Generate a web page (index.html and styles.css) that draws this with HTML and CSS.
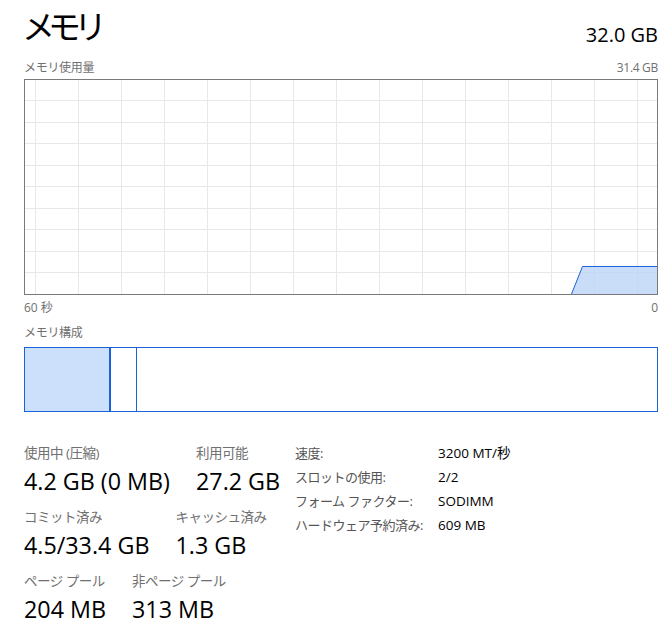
FILE: index.html
```html
<!DOCTYPE html>
<html lang="ja">
<head>
  <meta charset="UTF-8">
  <title>メモリ</title>
  <link rel="stylesheet" href="styles.css">
</head>
<body>

<div class="memory-page">
  <div class="header">
    <h1 class="title">メモリ</h1>
    <span class="total">32.0 GB</span>
  </div>

  <div class="chart-caption">
    <span>メモリ使用量</span>
    <span>31.4 GB</span>
  </div>

  <svg class="usage-chart" width="634" height="216" viewBox="0 0 634 216">
    <g stroke="#e8e8e8" stroke-width="1">
      <line x1="11.5" y1="0" x2="11.5" y2="216"/>
      <line x1="54.5" y1="0" x2="54.5" y2="216"/>
      <line x1="97.5" y1="0" x2="97.5" y2="216"/>
      <line x1="140.5" y1="0" x2="140.5" y2="216"/>
      <line x1="183.5" y1="0" x2="183.5" y2="216"/>
      <line x1="226.5" y1="0" x2="226.5" y2="216"/>
      <line x1="269.5" y1="0" x2="269.5" y2="216"/>
      <line x1="312.5" y1="0" x2="312.5" y2="216"/>
      <line x1="355.5" y1="0" x2="355.5" y2="216"/>
      <line x1="398.5" y1="0" x2="398.5" y2="216"/>
      <line x1="441.5" y1="0" x2="441.5" y2="216"/>
      <line x1="484.5" y1="0" x2="484.5" y2="216"/>
      <line x1="527.5" y1="0" x2="527.5" y2="216"/>
      <line x1="570.5" y1="0" x2="570.5" y2="216"/>
      <line x1="613.5" y1="0" x2="613.5" y2="216"/>
      <line x1="0" y1="21.5" x2="634" y2="21.5"/>
      <line x1="0" y1="43.5" x2="634" y2="43.5"/>
      <line x1="0" y1="64.5" x2="634" y2="64.5"/>
      <line x1="0" y1="86.5" x2="634" y2="86.5"/>
      <line x1="0" y1="107.5" x2="634" y2="107.5"/>
      <line x1="0" y1="129.5" x2="634" y2="129.5"/>
      <line x1="0" y1="150.5" x2="634" y2="150.5"/>
      <line x1="0" y1="172.5" x2="634" y2="172.5"/>
      <line x1="0" y1="193.5" x2="634" y2="193.5"/>
    </g>
    <polygon points="547.5,215 558.5,187.5 633,187.5 633,215" fill="#bcd5f7" fill-opacity="0.8"/>
    <polyline points="547.5,215 558.5,187.5 633,187.5" fill="none" stroke="#1a63d8" stroke-width="1"/>
    <rect x="0.5" y="0.5" width="633" height="215" fill="none" stroke="#7a7a7a" stroke-width="1"/>
  </svg>

  <div class="axis">
    <span>60 秒</span>
    <span>0</span>
  </div>

  <div class="section-label">メモリ構成</div>

  <div class="composition">
    <div class="seg seg-used"></div>
    <div class="seg seg-modified"></div>
    <div class="seg seg-rest"></div>
  </div>

  <div class="stats">
    <div class="stats-left">
      <div class="stat-row">
        <div class="stat">
          <div class="stat-label">使用中 (圧縮)</div>
          <div class="stat-value">4.2 GB (0 MB)</div>
        </div>
        <div class="stat">
          <div class="stat-label">利用可能</div>
          <div class="stat-value">27.2 GB</div>
        </div>
      </div>
      <div class="stat-row">
        <div class="stat">
          <div class="stat-label">コミット済み</div>
          <div class="stat-value">4.5/33.4 GB</div>
        </div>
        <div class="stat">
          <div class="stat-label">キャッシュ済み</div>
          <div class="stat-value">1.3 GB</div>
        </div>
      </div>
      <div class="stat-row">
        <div class="stat">
          <div class="stat-label">ページ プール</div>
          <div class="stat-value">204 MB</div>
        </div>
        <div class="stat">
          <div class="stat-label">非ページ プール</div>
          <div class="stat-value">313 MB</div>
        </div>
      </div>
    </div>

    <dl class="details">
      <dt>速度:</dt><dd>3200 MT/秒</dd>
      <dt>スロットの使用:</dt><dd>2/2</dd>
      <dt>フォーム ファクター:</dt><dd>SODIMM</dd>
      <dt>ハードウェア予約済み:</dt><dd>609 MB</dd>
    </dl>
  </div>
</div>

</body>
</html>
```

FILE: styles.css
```css
body {
  font-family: "Segoe UI", "Open Sans", "Noto Sans CJK JP", sans-serif;
  background-color: #ffffff;
  color: #000000;
  margin: 0;
  padding: 0;
}

.memory-page {
  width: 634px;
  padding: 4px 0 0 24px;
}

.header {
  display: flex;
  justify-content: space-between;
  align-items: flex-end;
  height: 45px;
}

.title {
  font-size: 33px;
  font-weight: normal;
  line-height: 44px;
  letter-spacing: -7px;
  margin: 0 0 0 -2px;
}

.total {
  font-size: 20px;
  line-height: 24px;
  margin-bottom: 2px;
}

.chart-caption,
.axis {
  display: flex;
  justify-content: space-between;
  font-size: 12px;
  line-height: 16px;
  color: #707070;
}

.chart-caption {
  margin-top: 11px;
  height: 19px;
  letter-spacing: -0.3px;
}

.usage-chart {
  display: block;
}

.axis {
  margin-top: 5px;
}

.section-label {
  font-size: 12px;
  line-height: 16px;
  color: #707070;
  margin-top: 9px;
  letter-spacing: -0.3px;
}

.composition {
  display: flex;
  height: 63px;
  border: 1px solid #1a63d8;
  margin-top: 6px;
}

.seg-used {
  width: 84px;
  background-color: #cce0fb;
  border-right: 2px solid #1a63d8;
}

.seg-modified {
  width: 25px;
  border-right: 1px solid #1a63d8;
}

.seg-rest {
  flex: 1;
}

.stats {
  display: flex;
  margin-top: 32px;
}

.stats-left {
  width: 271px;
}

.stat-row {
  display: flex;
  gap: 26px;
  margin-bottom: 12px;
}

.stat-label {
  width: 0;
  white-space: nowrap;
  font-size: 13.5px;
  line-height: 19px;
  letter-spacing: -0.5px;
  color: #707070;
}

.stat-value {
  font-size: 23.3px;
  line-height: 30px;
  margin-top: 3px;
}

.details {
  display: grid;
  grid-template-columns: 143px auto;
  grid-auto-rows: 24px;
  margin: 0;
  font-size: 13.5px;
  line-height: 18px;
}

.details dt {
  color: #555555;
  font-size: 13px;
  letter-spacing: -0.5px;
}

.details dd {
  margin: 0;
}
```
